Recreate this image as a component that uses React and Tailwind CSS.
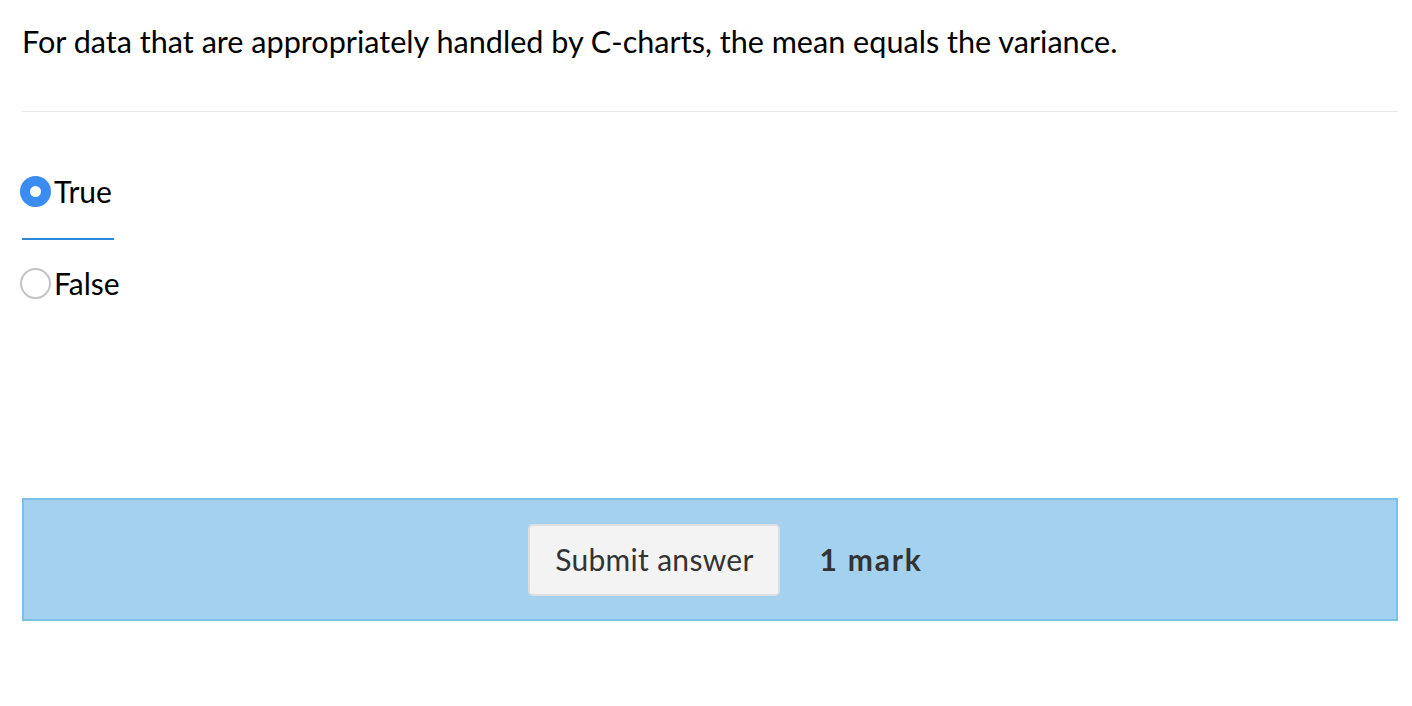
export default function App() {
  const font = { fontFamily: "Lato, 'Open Sans', sans-serif" };
  return (
    <div className="w-[1412px] h-[706px] bg-white pl-[22px] pr-[14px] text-black" style={font}>
      <p className="pt-[22px] text-[30.6px] leading-[40px] pb-[49px] border-b border-[#e8e8e8] whitespace-nowrap">
        For data that are appropriately handled by C-charts, the mean equals the variance.
      </p>

      <div className="pt-[63px] flex flex-col items-start">
        <label className="flex items-center h-[32px] w-[92px] box-content pb-[31px] border-b-2 border-[#2c8ad8]">
          <span className="-ml-[2px] w-[31px] h-[31px] rounded-full bg-[#3b8cf0] flex items-center justify-center">
            <span className="w-[11px] h-[11px] rounded-full bg-white" />
          </span>
          <span className="ml-[3px] text-[30px] leading-[34px] -mt-[1px]">True</span>
        </label>
        <label className="flex items-center h-[32px] mt-[27px]">
          <span className="-ml-[2px] w-[31px] h-[31px] rounded-full bg-white border-2 border-[#c4c4c4]" />
          <span className="ml-[3px] text-[30px] leading-[34px] -mt-[1px]">False</span>
        </label>
      </div>

      <div className="mt-[199px] h-[123px] bg-[#a3d1ee] border-2 border-[#7cc0e8] flex items-center justify-center pl-[31px] gap-[39px]">
        <button className="w-[252px] h-[72px] bg-[#f3f3f3] border-2 border-[#dedede] rounded-[5px] text-[30px] text-[#333] tracking-[0.3px]">
          Submit answer
        </button>
        <span className="text-[30px] font-bold text-[#333] tracking-[1.8px]">1 mark</span>
      </div>
    </div>
  );
}
